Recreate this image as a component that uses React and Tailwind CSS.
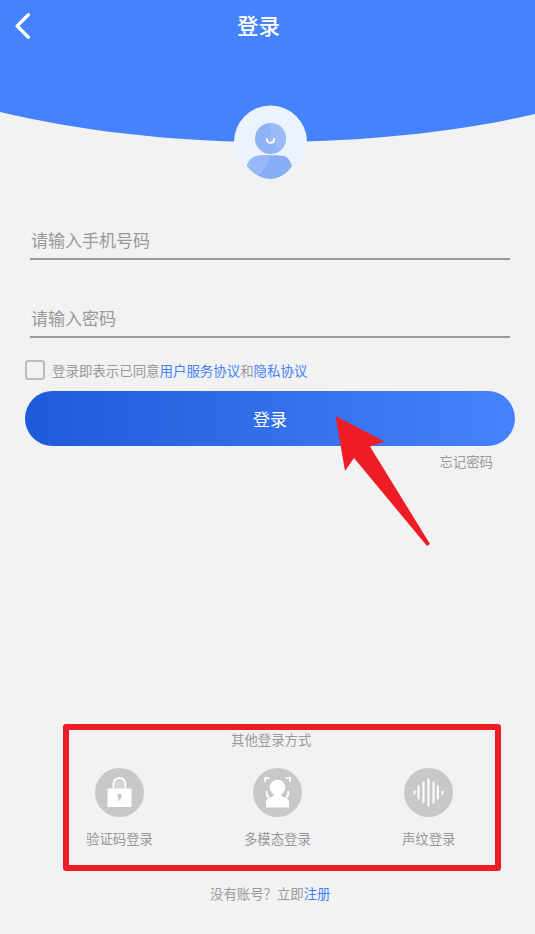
import React from "react";

const cjk = { fontFamily: '"Noto Sans CJK SC", "Noto Sans", sans-serif' };

function Avatar() {
  return (
    <svg viewBox="0 0 73 74" className="h-full w-full">
      <circle cx="36.5" cy="37" r="36.5" fill="#ebf4fe" />
      <circle cx="36.5" cy="33.5" r="15.5" fill="#8fb3f7" />
      <path d="M36.5 18a15.5 15.5 0 0 1 11 26.500L36.5 36z" fill="#9dbdf9" opacity="0.8" />
      <path
        d="M23 51c4-1 22-1 27 0 4 1 7 6 8 10-5 8-14 13-21.5 13C28 74 19 69 13 61c1-5 5-9 10-10z"
        fill="#88aef6"
      />
      <path d="M23 51c3-.6 8-.8 13-.8C34 60 28 68 24 70c-4-2-8-5-11-9 1-5 5-9 10-10z" fill="#98b9f8" />
      <path d="M32.800 34c.3 5 7.100 5 7.400 0" fill="none" stroke="#ffffff" strokeWidth="2" strokeLinecap="round" />
    </svg>
  );
}

function LockIcon() {
  return (
    <svg viewBox="0 0 49 49" className="h-full w-full">
      <circle cx="24.5" cy="24.5" r="24.5" fill="#c8c8c8" />
      <path d="M20.500 20.500v-4.500a3.900 3.900 0 0 1 7.800 0v4.500" fill="#d6d6d6" />
      <path d="M18.500 20.500v-4.500a5.900 5.900 0 0 1 11.800 0v4.500" fill="none" stroke="#ffffff" strokeWidth="2" />
      <rect x="12.5" y="20.5" width="24" height="18.5" fill="#ffffff" />
      <circle cx="24.5" cy="28" r="2.2" fill="#c8c8c8" />
      <rect x="23.6" y="28" width="1.8" height="4.5" fill="#c8c8c8" />
    </svg>
  );
}

function FaceIcon() {
  return (
    <svg viewBox="0 0 49 49" className="h-full w-full">
      <circle cx="24.5" cy="24.5" r="24.5" fill="#c8c8c8" />
      <path d="M12 14V10h4.500M32.500 10H37v4" fill="none" stroke="#ffffff" strokeWidth="1.600" />
      <circle cx="24.5" cy="19.500" r="7.800" fill="#ffffff" />
      <path d="M13 39.500v-6c0-2 1.500-3 4-4 2.500-.8 4-1.500 4-3.500h7c0 2 1.500 2.700 4 3.500 2.500 1 4 2 4 4v6z" fill="#ffffff" />
      <path d="M14 23c-.8 2.500-.2 5 2 6.500M35 23c.8 2.500.2 5-2 6.500" fill="none" stroke="#ffffff" strokeWidth="2" />
    </svg>
  );
}

function VoiceIcon() {
  const bars = [
    [10.5, 4],
    [14.5, 14],
    [19.5, 22],
    [24.5, 28],
    [29.5, 22],
    [33.8, 14],
    [38.5, 4],
  ];
  return (
    <svg viewBox="0 0 49 49" className="h-full w-full">
      <circle cx="24.5" cy="24.5" r="24.5" fill="#c8c8c8" />
      {bars.map(([x, h]) => (
        <rect key={x} x={x - 1} y={24.5 - h / 2} width="2" height={h} rx="1" fill="#ffffff" />
      ))}
    </svg>
  );
}

const methods = [
  { label: "验证码登录", icon: <LockIcon /> },
  { label: "多模态登录", icon: <FaceIcon /> },
  { label: "声纹登录", icon: <VoiceIcon /> },
];

export default function App() {
  return (
    <div className="relative flex h-[934px] w-[535px] flex-col overflow-hidden bg-[#f2f2f2] text-[13.4px] text-[#999999]" style={cjk}>
      {/* header */}
      <div className="relative h-[142px] shrink-0">
        <svg viewBox="0 0 535 142" className="absolute inset-0 h-full w-full" preserveAspectRatio="none">
          <path d="M0 0H535V114C450 134 350 142 267 142C180 142 85 132 0 112Z" fill="#4582fd" />
        </svg>
        <div className="relative flex items-center pt-[10px]">
          <svg viewBox="0 0 14 24" className="ml-[15px] mt-[2px] h-[26px] w-[15px]" fill="none" stroke="#ffffff" strokeWidth="3" strokeLinecap="round" strokeLinejoin="round">
            <path d="M12.500 1.500L2 12l10.500 10.500" />
          </svg>
          <div className="ml-[207px] text-[21.500px] leading-[30px] font-medium text-white">登录</div>
        </div>
      </div>

      <div className="relative -mt-[37px] ml-[234px] h-[74px] w-[73px] shrink-0">
        <Avatar />
      </div>

      {/* form */}
      <div className="mt-[42px] px-[25px]">
        <div className="ml-[5px] h-[39px] w-[480px] border-b-2 border-[#999999] pl-[1px] text-[17px] leading-[38px] text-[#999999]">请输入手机号码</div>
        <div className="ml-[5px] mt-[39px] h-[39px] w-[480px] border-b-2 border-[#999999] pl-[1px] text-[17px] leading-[38px] text-[#999999]">请输入密码</div>

        <div className="mt-[22px] flex h-[20px] items-center">
          <div className="h-[20px] w-[20px] rounded-[3px] border-2 border-[#bdbdbd]" />
          <div className="ml-[7px] text-[13.450px]">
            登录即表示已同意<span className="text-[#4582fd]">用户服务协议</span>和<span className="text-[#4582fd]">隐私协议</span>
          </div>
        </div>

        <button className="mt-[11px] flex h-[55px] w-[490px] items-center justify-center rounded-[27.500px] bg-linear-to-r from-[#1f5bd8] to-[#4582fd] text-[17px] text-white">
          登录
        </button>
        <div className="mt-[6px] pr-[17px] text-right leading-[18px]">忘记密码</div>
      </div>

      {/* other login methods */}
      <div className="mt-auto pb-[32px]">
        <div className="ml-[231px] leading-[18px]">其他登录方式</div>
        <div className="mt-[20px] ml-[86px] flex gap-[91px]">
          {methods.map((m) => (
            <div key={m.label} className="flex flex-col items-center">
              <div className="h-[49px] w-[49px]">{m.icon}</div>
              <div className="mt-[12px] leading-[18px]">{m.label}</div>
            </div>
          ))}
        </div>
        <div className="mt-[37px] ml-[210px] leading-[18px]">
          没有账号？立即<span className="text-[#4582fd]">注册</span>
        </div>
      </div>

      {/* red annotations on top of the screenshot */}
      <div className="absolute top-[724px] left-[63px] h-[147px] w-[438px] rounded-[3px] border-[6px] border-[#ee1c25]" />
      <svg viewBox="0 0 535 934" className="pointer-events-none absolute inset-0 h-full w-full">
        <path d="M335.500 416L384.500 441.500L370 446.500L430 544L427 546L354 458L345 471Z" fill="#ee1c25" />
      </svg>
    </div>
  );
}
